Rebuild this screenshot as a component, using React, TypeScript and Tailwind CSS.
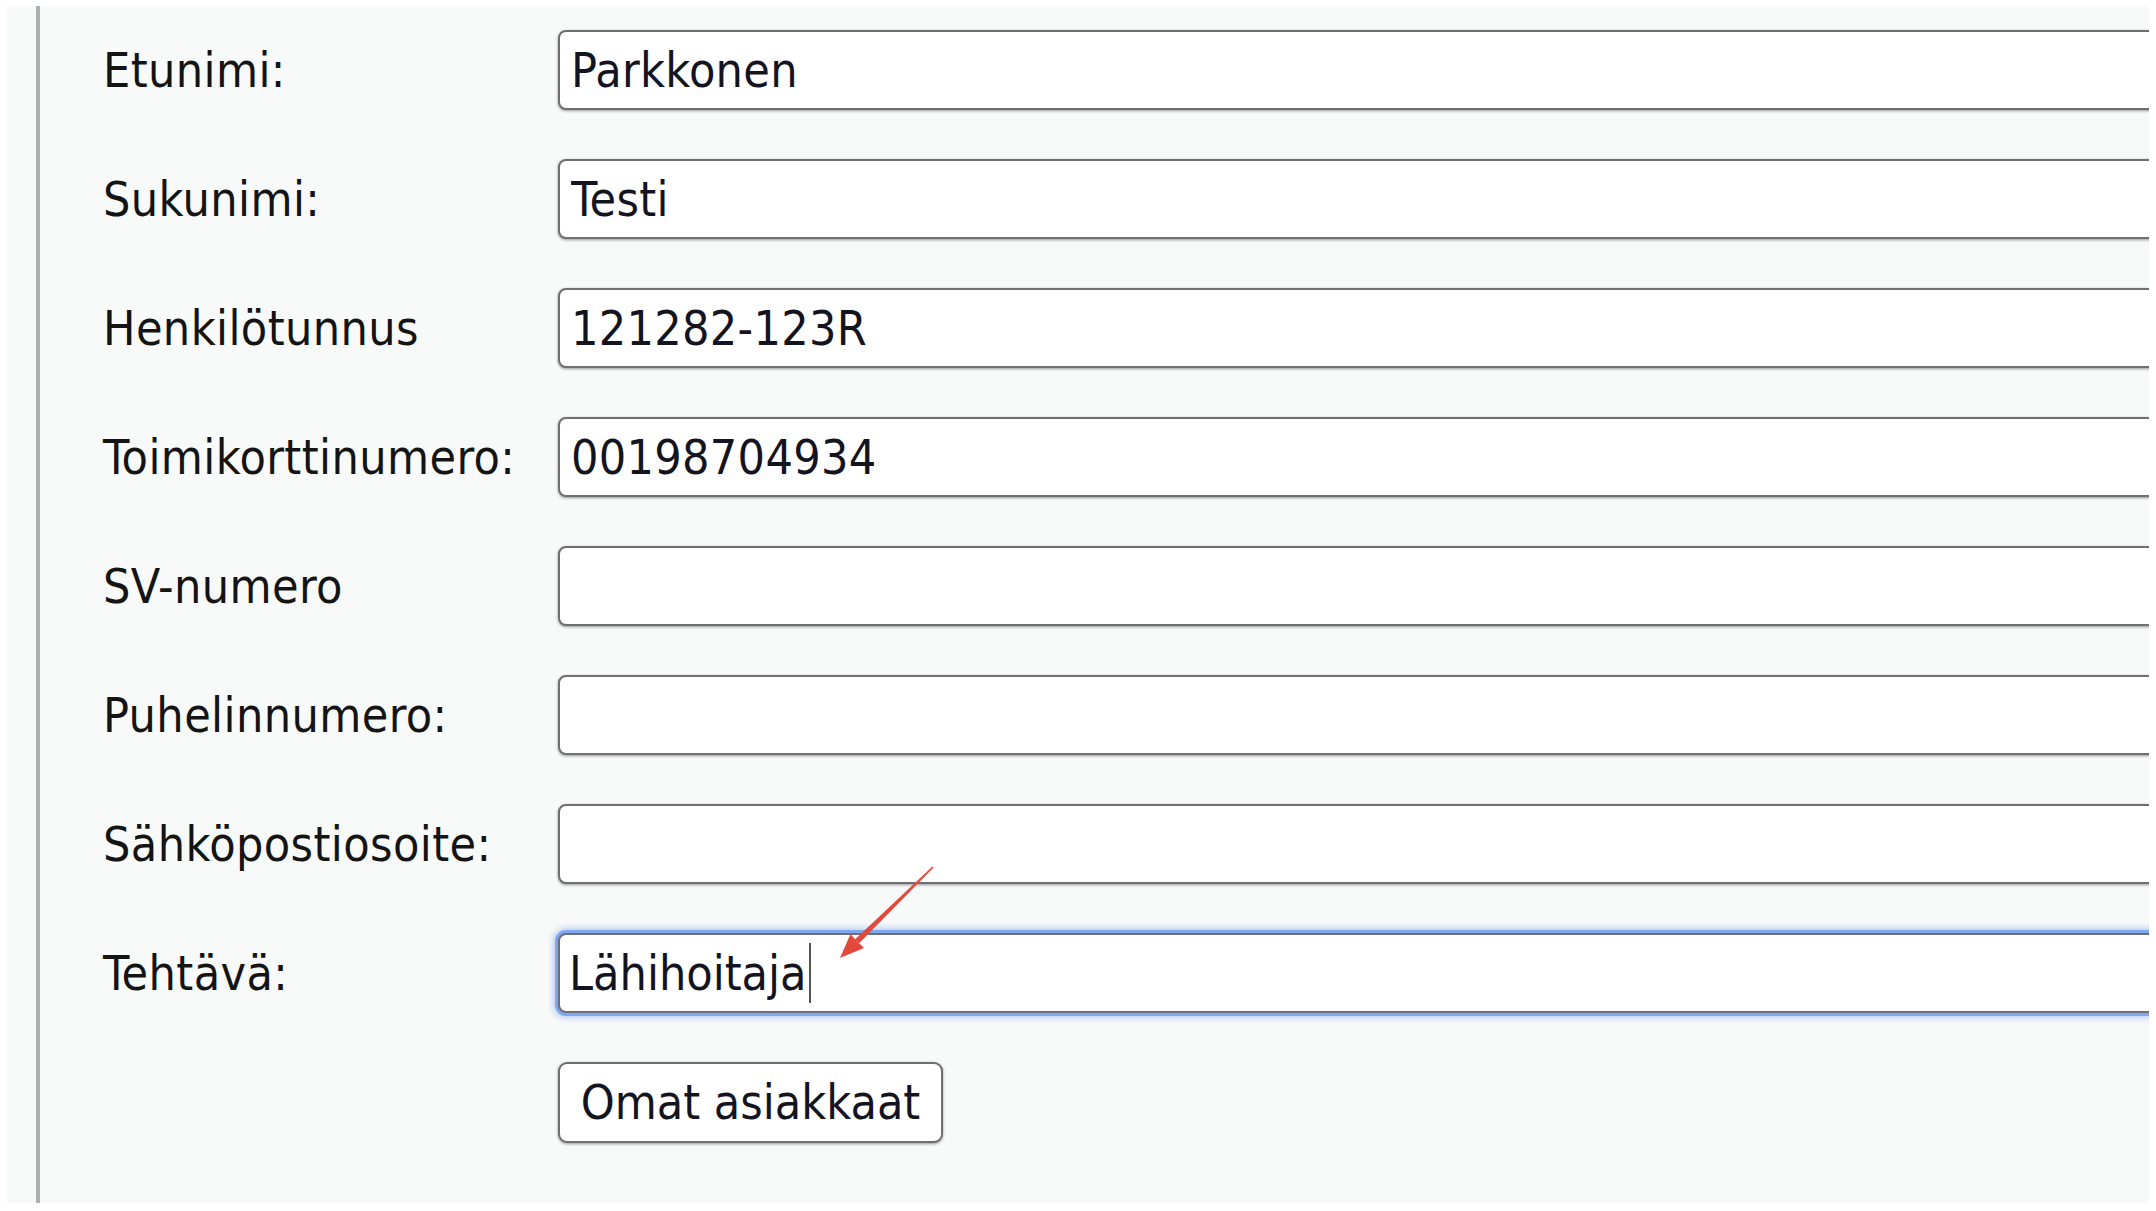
import React from 'react';

const FONT = "font-['DejaVu_Sans_Condensed','DejaVu_Sans',Tahoma,sans-serif] font-stretch-condensed";

const FIELDS: { label: string; value: string }[] = [
  { label: 'Etunimi:', value: 'Parkkonen' },
  { label: 'Sukunimi:', value: 'Testi' },
  { label: 'Henkilötunnus', value: '121282-123R' },
  { label: 'Toimikorttinumero:', value: '00198704934' },
  { label: 'SV-numero', value: '' },
  { label: 'Puhelinnumero:', value: '' },
  { label: 'Sähköpostiosoite:', value: '' },
];

function Label({ children }: { children: React.ReactNode }) {
  return (
    <div className="w-[455px] shrink-0 text-[48px] leading-none tracking-[0.4px] text-[#141414]">
      {children}
    </div>
  );
}

function FieldRow({ label, value }: { label: string; value: string }) {
  return (
    <div className="flex h-[80px] items-center">
      <Label>{label}</Label>
      <input
        readOnly
        value={value}
        className={`h-[80px] w-[1640px] shrink-0 rounded-[8px] border-2 border-[#6f6f6f] bg-white px-[11px] text-[48px] tracking-[0.3px] text-[#141420] shadow-[0_1px_3px_rgba(0,0,0,0.4)] outline-none ${FONT}`}
      />
    </div>
  );
}

/** Focused input: caret drawn after the text, blue focus glow. */
function FocusedRow({ label, value }: { label: string; value: string }) {
  return (
    <div className="flex h-[80px] items-center">
      <Label>{label}</Label>
      <div className="flex h-[80px] w-[1640px] shrink-0 items-center rounded-[8px] border-2 border-[#6f6f6f] bg-white px-[9px] text-[48px] text-[#141420] shadow-[0_0_0_3px_rgba(120,162,240,0.9),0_0_6px_5px_rgba(140,175,240,0.6)]">
        <span>{value}</span>
        <span className="ml-[2px] h-[60px] w-[2px] bg-[#555]" />
      </div>
    </div>
  );
}

function Arrow() {
  return (
    <svg className="absolute left-[830px] top-[860px]" width="110" height="110" viewBox="0 0 110 110">
      <polygon points="103.6,7.6 102.4,6.4 25.2,79.2 29.2,83.2" fill="#e0493b" />
      <polygon points="10,98 34,88 20.4,74.2" fill="#e0493b" />
    </svg>
  );
}

export default function App() {
  return (
    <div className={`relative h-[1211px] w-[2156px] overflow-hidden bg-white pb-[8px] pl-[7px] pr-[7px] pt-[6px] ${FONT}`}>
      <div className="flex h-full overflow-hidden bg-[#f8faf9]">
        <div className="ml-[29px] w-[4px] shrink-0 bg-[#aeaeae]" />
        <div className="flex flex-col gap-[49px] pl-[63px] pt-[24px]">
          {FIELDS.map((f) => (
            <FieldRow key={f.label} label={f.label} value={f.value} />
          ))}
          <FocusedRow label="Tehtävä:" value="Lähihoitaja" />
          <div className="flex h-[80px] items-center">
            <div className="w-[455px] shrink-0" />
            <button className="h-[81px] w-[385px] rounded-[9px] border-2 border-[#6f6f6f] bg-white text-[48px] text-[#141420] shadow-[0_1px_3px_rgba(0,0,0,0.4)]">
              Omat asiakkaat
            </button>
          </div>
        </div>
      </div>
      <Arrow />
    </div>
  );
}
